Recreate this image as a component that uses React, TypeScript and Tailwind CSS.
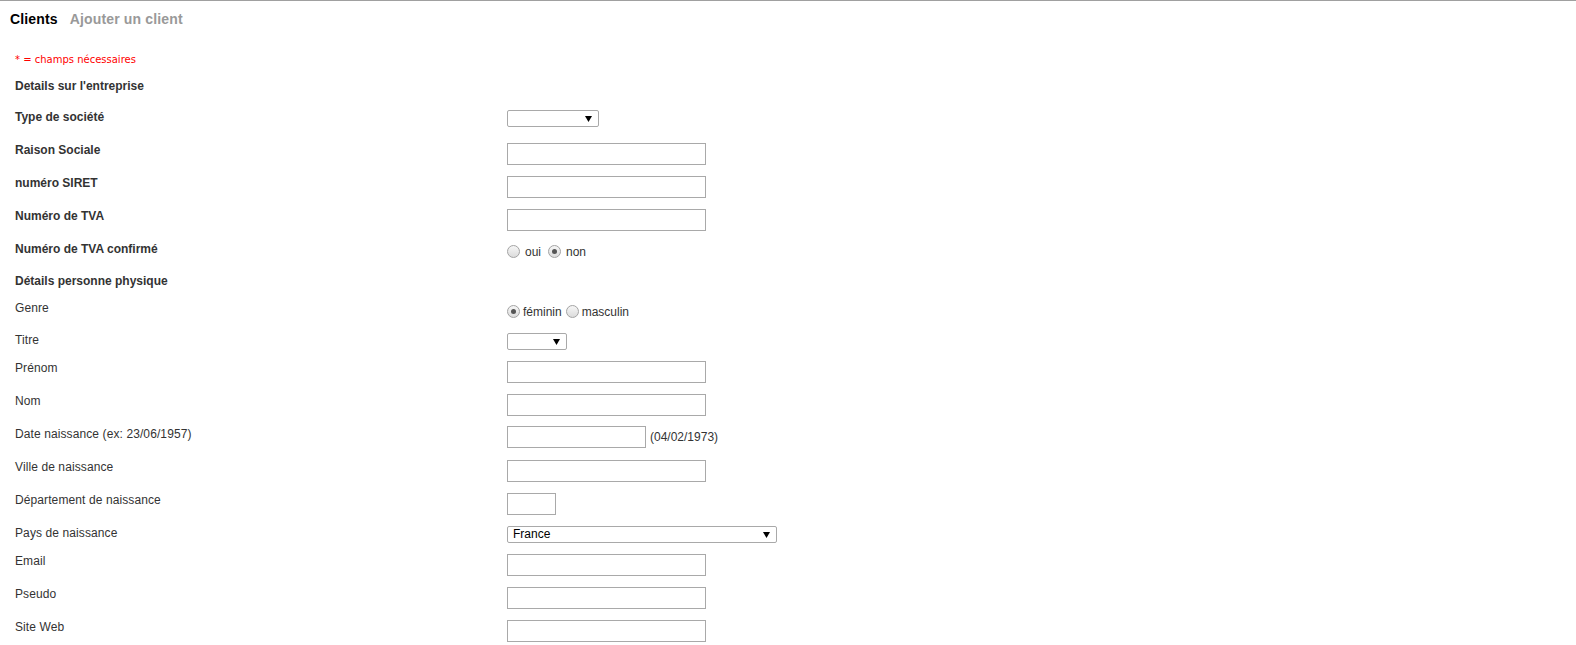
import React from 'react';

// Row description for the client form
type Row = {
  label: string;
  bold?: boolean;
  h: string; // tailwind height class
  control?: React.ReactNode;
};

function TextInput({ w = 'w-[199px]' }: { w?: string }) {
  return <input type="text" className={`${w} h-[22px] border border-[#a9a9a9] bg-white outline-none`} />;
}

function Select({ w, value = '' }: { w: string; value?: string }) {
  return (
    <div className={`${w} h-[17px] mt-px flex items-center justify-between border border-[#a9a9a9] rounded-[2px] bg-white pl-[5px] pr-[6px]`}>
      <span className="text-[12px] leading-[15px] text-black">{value}</span>
      <svg width="7" height="6" viewBox="0 0 7 6" className="shrink-0">
        <polygon points="0,0 7,0 3.5,6" fill="#000" />
      </svg>
    </div>
  );
}

function Radio({ checked = false }: { checked?: boolean }) {
  return (
    <span className="w-[13px] h-[13px] shrink-0 rounded-full border border-[#a3a3a3] bg-linear-to-b from-[#f6f6f6] to-[#dcdcdc] flex items-center justify-center">
      {checked && <span className="w-[5px] h-[5px] rounded-full bg-[#555]" />}
    </span>
  );
}

function RadioGroup({ options, selected, mt, gap, textGap }: { options: string[]; selected: number; mt: string; gap: string; textGap: string }) {
  return (
    <div className={`flex items-start ${mt} ${gap}`}>
      {options.map((o, i) => (
        <label key={o} className={`flex items-start ${textGap}`}>
          <Radio checked={i === selected} />
          <span className="text-[12px] leading-[16px] text-[#333] -mt-px">{o}</span>
        </label>
      ))}
    </div>
  );
}

const rows: Row[] = [
  { label: "Details sur l'entreprise", bold: true, h: 'h-[31px]' },
  { label: 'Type de société', bold: true, h: 'h-[33px]', control: <Select w="w-[92px]" /> },
  { label: 'Raison Sociale', bold: true, h: 'h-[33px]', control: <TextInput /> },
  { label: 'numéro SIRET', bold: true, h: 'h-[33px]', control: <TextInput /> },
  { label: 'Numéro de TVA', bold: true, h: 'h-[33px]', control: <TextInput /> },
  {
    label: 'Numéro de TVA confirmé',
    bold: true,
    h: 'h-[32px]',
    control: <RadioGroup options={['oui', 'non']} selected={1} mt="mt-[4px]" gap="gap-[7px]" textGap="gap-[5px]" />,
  },
  { label: 'Détails personne physique', bold: true, h: 'h-[27px]' },
  {
    label: 'Genre',
    h: 'h-[32px]',
    control: <RadioGroup options={['féminin', 'masculin']} selected={0} mt="mt-[5px]" gap="gap-[4px]" textGap="gap-[3px]" />,
  },
  { label: 'Titre', h: 'h-[28px]', control: <Select w="w-[60px]" /> },
  { label: 'Prénom', h: 'h-[33px]', control: <TextInput /> },
  { label: 'Nom', h: 'h-[33px]', control: <TextInput /> },
  {
    label: 'Date naissance (ex: 23/06/1957)',
    h: 'h-[33px]',
    control: (
      <div className="flex items-center gap-[4px]">
        <TextInput w="w-[139px]" />
        <span className="text-[12px] leading-[16px] text-[#333]">(04/02/1973)</span>
      </div>
    ),
  },
  { label: 'Ville de naissance', h: 'h-[33px]', control: <TextInput /> },
  { label: 'Département de naissance', h: 'h-[33px]', control: <TextInput w="w-[49px]" /> },
  { label: 'Pays de naissance', h: 'h-[28px]', control: <Select w="w-[270px]" value="France" /> },
  { label: 'Email', h: 'h-[33px]', control: <TextInput /> },
  { label: 'Pseudo', h: 'h-[33px]', control: <TextInput /> },
  { label: 'Site Web', h: 'h-[33px]', control: <TextInput /> },
];

export default function App() {
  return (
    <div className="w-[1576px] h-[645px] overflow-hidden bg-white border-t border-[#a0a0a0] font-['Liberation_Sans',Arial,sans-serif]">
      {/* Tabs */}
      <div className="flex gap-[12px] pl-[10px] pt-[10px] text-[14px] leading-[16px] font-bold tracking-[0.15px]">
        <span className="text-black">Clients</span>
        <span className="text-[#999]">Ajouter un client</span>
      </div>

      {/* Required fields note */}
      <p className="mt-[27px] pl-[15px] text-[10px] leading-[12px] text-[#ff0000] font-['DejaVu_Sans',Verdana,sans-serif]">
        * = champs nécessaires
      </p>

      {/* Form */}
      <div className="mt-[12px] pl-[15px] flex flex-col">
        {rows.map((r) => (
          <div key={r.label} className={`grid grid-cols-[492px_1fr] items-start ${r.h}`}>
            <span className={`text-[12px] leading-[16px] text-[#333] ${r.bold ? 'font-bold' : 'tracking-[0.1px]'}`}>{r.label}</span>
            <div>{r.control}</div>
          </div>
        ))}
      </div>
    </div>
  );
}
